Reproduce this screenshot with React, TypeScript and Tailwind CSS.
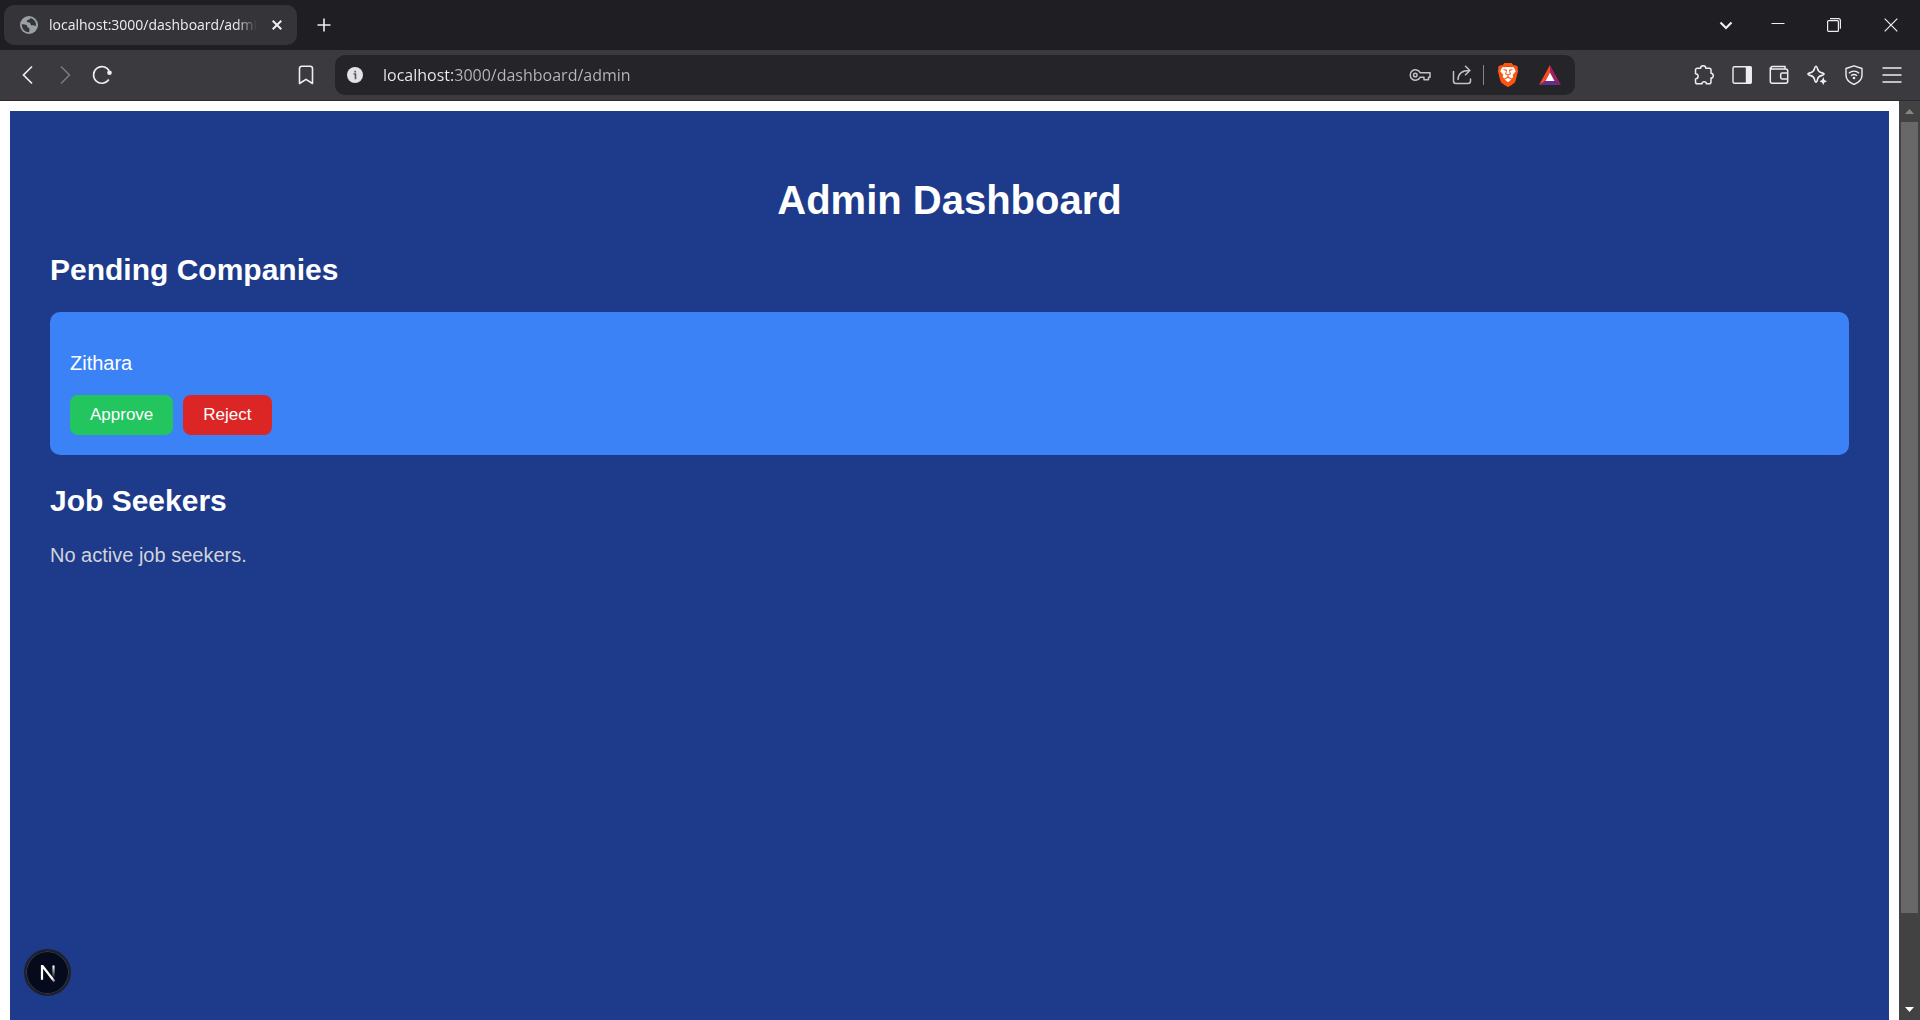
import type { ReactNode } from "react";
import { SiBrave } from "react-icons/si";

function IconButton({ label, className = "", children }: { label: string; className?: string; children: ReactNode }) {
  return (
    <button type="button" aria-label={label} className={`flex h-8 shrink-0 items-center justify-center ${className}`}>
      {children}
    </button>
  );
}

function Stroke({ size, width = 1.5, children, viewBox = "0 0 20 20", className = "" }: { size: number; width?: number; children: ReactNode; viewBox?: string; className?: string }) {
  return (
    <svg width={size} height={size} viewBox={viewBox} fill="none" stroke="currentColor" strokeWidth={width} className={className} aria-hidden="true">
      {children}
    </svg>
  );
}

function TabStrip() {
  return (
    <header className="flex h-[50px] shrink-0 items-center bg-[#1f1e23] pl-1 text-[#eeeef0]">
      <div className="flex h-10 w-[293px] items-center rounded-[10px] bg-[#353439] pl-4 pr-2">
        <svg width="18" height="18" viewBox="0 0 18 18" className="shrink-0" aria-hidden="true">
          <circle cx="9" cy="9" r="9" fill="#9aa0a6" />
          <path d="M1.8 8.2c1.6 0 4.1.1 5.1 1.3.8 1 .1 2.1 1.5 2.3 1 .2 1.2.9 1 1.7l-.2 2.8a7.3 7.3 0 0 1-7.4-8.1z" fill="#353439" />
          <path d="M10.2 1.9c-.4 1-.5 1.5-1.6 1.8-1.4.3-1.9.9-1.7 1.9.2.8 1.2.8 2.2.8 1.2.1 1.3.8 1.3 1.7.1 1.1 1.2 1.4 2.3 1.2 1-.2 1.5.5 3.3.6A7.2 7.2 0 0 0 10.2 1.9z" fill="#353439" />
        </svg>
        <span className="ml-[11px] w-[208px] overflow-hidden whitespace-nowrap text-[14px] leading-5 [mask-image:linear-gradient(to_right,#000_90%,transparent)]">
          localhost:3000/dashboard/admin
        </span>
        <IconButton label="Close tab" className="ml-auto w-6">
          <Stroke size={10} width={2} viewBox="0 0 10 10"><path d="M.7.7l8.6 8.6M9.3.7L.7 9.3" /></Stroke>
        </IconButton>
      </div>
      <IconButton label="New tab" className="ml-[11px] w-8">
        <Stroke size={14} width={1.6} viewBox="0 0 14 14"><path d="M7 .5v13M.5 7h13" /></Stroke>
      </IconButton>
      <div className="ml-auto flex items-center">
        <IconButton label="Search tabs" className="w-12">
          <Stroke size={14} width={2.2} viewBox="0 0 14 14"><path d="M1.500 4.500L7 10l5.500-5.500" /></Stroke>
        </IconButton>
        <IconButton label="Minimize" className="w-14">
          <Stroke size={14} width={1} viewBox="0 0 14 14"><path d="M.5 5.500h13" /></Stroke>
        </IconButton>
        <IconButton label="Restore" className="w-14">
          <Stroke size={14} width={1.2} viewBox="0 0 14 14">
            <rect x=".6" y="2.6" width="10.800" height="10.800" rx="1" />
            <path d="M3 .7h8.400a2 2 0 0 1 2 2v8" />
          </Stroke>
        </IconButton>
        <IconButton label="Close window" className="w-[58px]">
          <Stroke size={14} width={1.2} viewBox="0 0 14 14"><path d="M.7.7l12.6 12.6M13.3.7L.7 13.3" /></Stroke>
        </IconButton>
      </div>
    </header>
  );
}

function AddressBar() {
  return (
    <div className="flex h-10 min-w-0 flex-1 items-center rounded-[10px] bg-[#252429] pl-3 pr-1 text-[#c3c2c8]">
      <IconButton label="View site information" className="w-4">
        <svg width="16" height="16" viewBox="0 0 16 16" aria-hidden="true">
          <circle cx="8" cy="8" r="8" fill="#e3e2e8" />
          <path d="M6.500 7h2v5.200M8.200 3.800v1.700" stroke="#5b5a60" strokeWidth="1.700" fill="none" />
        </svg>
      </IconButton>
      <input
        aria-label="Address"
        defaultValue="localhost:3000/dashboard/admin"
        className="ml-5 min-w-0 flex-1 bg-[linear-gradient(to_right,#f0eff3_71px,#b9b8be_71px)] bg-clip-text text-base leading-6 text-transparent outline-none"
      />
      <IconButton label="Passwords" className="w-[42px]">
        <svg width="22" height="14" viewBox="0 0 22 14" fill="none" stroke="currentColor" strokeWidth="1.500" aria-hidden="true">
          <path d="M11.100 4.700A5.200 5.200 0 1 0 11.100 9.300H15v2.500h4.500V9.300H21V4.700z" strokeLinejoin="round" />
          <circle cx="6.300" cy="7" r="1.800" />
        </svg>
      </IconButton>
      <IconButton label="Share" className="w-[42px]">
        <Stroke size={20} width={1.5}>
          <path d="M1.500 6.500v9.500a2.500 2.500 0 0 0 2.500 2.500h12a2.500 2.500 0 0 0 2.500-2.500v-2" strokeLinecap="round" />
          <path d="M6 14.500c.2-5.500 3-9 11.500-9M13.500 1.200l4.300 4.300-4.300 4.300" strokeLinecap="round" />
        </Stroke>
      </IconButton>
      <span className="h-5 w-px bg-[#85848a]" />
      <IconButton label="Brave Shields" className="ml-[3px] w-[42px]">
        <span className="relative flex">
          <svg width="24" height="24" viewBox="0 0 24 24" aria-hidden="true"><path d="M5 4h14l1 5-4 10-4 3-4-3L4 9z" fill="#fff" /></svg>
          <SiBrave size={24} className="absolute inset-0 text-[#fb5413]" />
        </span>
      </IconButton>
      <IconButton label="Brave Rewards" className="w-[42px]">
        <svg width="22" height="20" viewBox="0 0 22 20" aria-hidden="true">
          <path d="M11 0L0 20l6.500-4L11 7.500z" fill="#ff4724" />
          <path d="M11 0l11 20-6.500-4L11 7.500z" fill="#9e1f63" />
          <path d="M0 20h22l-6.500-4h-9z" fill="#662d91" />
          <path d="M11 7.500L6.500 16h9z" fill="#fff" />
        </svg>
      </IconButton>
    </div>
  );
}

function Toolbar() {
  return (
    <nav aria-label="Browser toolbar" className="flex h-[51px] shrink-0 items-center border-b border-[#2b2a2f] bg-[#3b3a3f] text-[#eeeef0]">
      <div className="flex w-[335px] shrink-0 items-center pl-[9px]">
        <IconButton label="Back" className="w-[37px]">
          <Stroke size={20} width={1.7}><path d="M14 1.500L5.500 10l8.500 8.500" /></Stroke>
        </IconButton>
        <IconButton label="Forward" className="w-[37px] text-[#7d7c82]">
          <Stroke size={20} width={1.5}><path d="M6 1.500l8.500 8.500L6 18.500" /></Stroke>
        </IconButton>
        <IconButton label="Reload" className="w-[37px]">
          <Stroke size={20} width={1.6}>
            <path d="M16.800 14.500a8.300 8.300 0 1 1 .3-8.600" />
            <circle cx="17.500" cy="7.800" r="2.300" fill="currentColor" stroke="none" />
          </Stroke>
        </IconButton>
        <IconButton label="Bookmark this page" className="ml-auto mr-[11px] w-9">
          <Stroke size={20} width={1.6}><path d="M3.500 3.500a2.300 2.300 0 0 1 2.300-2.300h8.400a2.300 2.300 0 0 1 2.300 2.300v15L10 14.300l-6.500 4.200z" strokeLinejoin="round" /></Stroke>
        </IconButton>
      </div>
      <AddressBar />
      <div className="flex w-[345px] shrink-0 items-center justify-end pr-2.5">
        <IconButton label="Extensions" className="w-[38px]">
          <Stroke size={20} width={1.5}>
            <path d="M1.500 5a1.800 1.800 0 0 1 1.800-1.800H6.600C6.600 0 11.800 0 11.800 3.200h3.400A1.800 1.800 0 0 1 17 5v3.300c3 .2 3 4.600 0 4.800V17a1.800 1.800 0 0 1-1.800 1.800h-2.700c-.3-2.700-4.300-2.700-4.600 0H3.300A1.800 1.800 0 0 1 1.500 17v-3c3.500-.3 3.500-5 0-5.300z" strokeLinejoin="round" />
          </Stroke>
        </IconButton>
        <IconButton label="Show sidebar" className="w-[37px]">
          <Stroke size={20} width={1.4}>
            <rect x="1" y="1.700" width="18" height="16.600" rx="1.500" />
            <path d="M14.500 1.700h3.700a1 1 0 0 1 1 1v14.600a1 1 0 0 1-1 1h-3.700z" fill="currentColor" />
          </Stroke>
        </IconButton>
        <IconButton label="Wallet" className="w-[38px]">
          <Stroke size={20} width={1.5}>
            <path d="M18.700 7.500V6a2 2 0 0 0-2-2H3.200a1.200 1.200 0 0 1 0-2.400H16V4M1.300 2.500v13.700a2 2 0 0 0 2 2h13.400a2 2 0 0 0 2-2v-1.700" />
            <path d="M18.700 8h-5.500a1.500 1.500 0 0 0-1.500 1.500v3a1.500 1.500 0 0 0 1.500 1.500h5.500z" />
          </Stroke>
        </IconButton>
        <IconButton label="Leo AI" className="w-[37px]">
          <Stroke size={20} width={1.6}>
            <path d="M9 1.200c.9 0 1.100.7 1.500 2.600.6 2.500 1.300 3.200 3.800 3.800 1.900.4 2.700.6 2.700 1.500s-.8 1.100-2.700 1.500c-2.500.6-3.200 1.300-3.800 3.800-.4 1.900-.6 2.700-1.500 2.700s-1.100-.8-1.500-2.700c-.6-2.500-1.300-3.200-3.800-3.800C1.800 10.200 1 10 1 9.100s.8-1.100 2.700-1.500c2.500-.6 3.200-1.300 3.800-3.800C7.900 1.900 8.100 1.200 9 1.200z" />
            <path d="M16.300 12l1.100 3 2.600 1.300-2.600 1.100-1.100 2.600-1.300-2.600-2.500-1.100 2.500-1.300z" fill="currentColor" stroke="none" />
          </Stroke>
        </IconButton>
        <IconButton label="VPN" className="w-[38px]">
          <Stroke size={20} width={1.4}>
            <path d="M10 .8l8 2.700v6.800c0 4.200-3.500 7.300-8 9.200-4.500-1.900-8-5-8-9.200V3.500z" strokeLinejoin="round" />
            <path d="M4.900 8.200c3-2.600 7.200-2.600 10.200 0M7 10.700c1.800-1.500 4.200-1.500 6 0" />
            <circle cx="10" cy="13" r="1.300" fill="currentColor" stroke="none" />
          </Stroke>
        </IconButton>
        <IconButton label="Menu" className="w-[37px]">
          <Stroke size={20} width={1.6}><path d="M.5 3h19M.5 10h19M.5 17h19" /></Stroke>
        </IconButton>
      </div>
    </nav>
  );
}

function Scrollbar() {
  return (
    <div aria-hidden="true" className="flex w-[21px] shrink-0 flex-col bg-[#424242] px-0.5">
      <div className="flex h-[21px] items-center justify-center">
        <svg width="9" height="5" viewBox="0 0 9 5"><path d="M0 5L4.500 0 9 5z" fill="#868686" /></svg>
      </div>
      <div className="flex flex-1 flex-col">
        <div className="flex-[46] bg-[#686868]" />
        <div className="flex-[5]" />
      </div>
      <div className="flex h-[21px] items-center justify-center">
        <svg width="9" height="5" viewBox="0 0 9 5"><path d="M0 0h9L4.500 5z" fill="#fff" /></svg>
      </div>
    </div>
  );
}

function Dashboard() {
  return (
    <main className="flex-1 bg-[#1e3a8a] px-10 pt-[65px] font-['Liberation_Sans',Arial,sans-serif] text-xl leading-6 text-white">
      <h1 className="text-center text-[40px] font-bold leading-[48px]">Admin Dashboard</h1>
      <section className="mt-[29px]">
        <h2 className="text-[30px] font-bold leading-[34px]">Pending Companies</h2>
        <article className="mt-[25px] rounded-[10px] bg-[#3b82f6] p-5">
          <p className="mt-[19px]">Zithara</p>
          <div className="mt-5 flex gap-2.5 text-[17px] leading-5">
            <button type="button" className="rounded-lg bg-[#22c55e] px-5 py-2.5">Approve</button>
            <button type="button" className="rounded-lg bg-[#dc2626] px-5 py-2.5">Reject</button>
          </div>
        </article>
      </section>
      <section className="mt-[29px]">
        <h2 className="text-[30px] font-bold leading-[34px]">Job Seekers</h2>
        <p className="mt-[25px] text-[#d1d5db]">No active job seekers.</p>
      </section>
    </main>
  );
}

function DevToolsBadge() {
  return (
    <button type="button" aria-label="Open Next.js Dev Tools" className="absolute bottom-6 left-6 flex h-[47px] w-[47px] items-center justify-center rounded-full border-2 border-[#1d212c] bg-[#050b1c] shadow-[inset_0_0_0_1px_#343a4b]">
      <svg width="18" height="20" viewBox="0 0 18 20" fill="none" aria-hidden="true">
        <defs>
          <linearGradient id="diagonal" x1="9" y1="9" x2="17" y2="19" gradientUnits="userSpaceOnUse">
            <stop stopColor="#fff" /><stop offset=".6" stopColor="#fff" /><stop offset="1" stopColor="#fff" stopOpacity=".2" />
          </linearGradient>
          <linearGradient id="stem" x1="0" y1="3" x2="0" y2="15" gradientUnits="userSpaceOnUse">
            <stop stopColor="#fff" /><stop offset="1" stopColor="#fff" stopOpacity="0" />
          </linearGradient>
        </defs>
        <path d="M3 16.800V3.200h.6L15.500 18.500" stroke="url(#diagonal)" strokeWidth="2.200" />
        <path d="M14.500 2.500v12" stroke="url(#stem)" strokeWidth="2.200" />
      </svg>
    </button>
  );
}

export default function App() {
  return (
    <div className="flex h-screen flex-col overflow-hidden bg-white font-['Open_Sans','Noto_Sans',sans-serif]">
      <TabStrip />
      <Toolbar />
      <div className="relative flex min-h-0 flex-1">
        <div className="flex min-w-0 flex-1 px-2.5 pt-2.5">
          <Dashboard />
        </div>
        <Scrollbar />
        <DevToolsBadge />
      </div>
    </div>
  );
}
